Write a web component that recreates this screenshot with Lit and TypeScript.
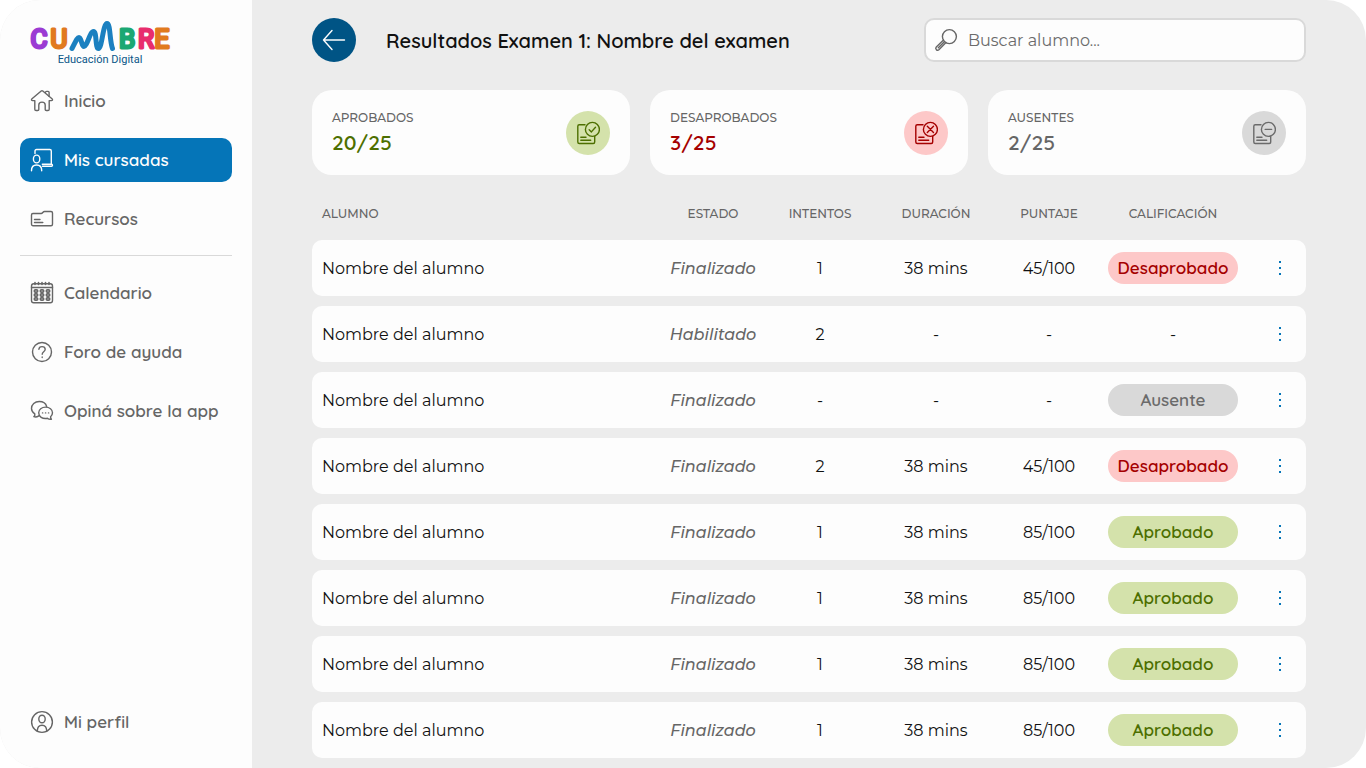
import { LitElement, html, css, svg, nothing } from "lit";
import { customElement, property } from "lit/decorators.js";
import { classMap } from "lit/directives/class-map.js";

const icons: Record<string, unknown> = {
  home: svg`<path d="M11.2 2 2 9.8c-1 .9-.5 1.8.6 1.8h2.2v8.6c0 .9.4 1.3 1.3 1.3h1.6c.7 0 1.1-.4 1.1-1.1v-4.3c0-2 1-3 3.2-3s3.200 1 3.200 3v4.300c0 .7.400 1.100 1.100 1.100h1.600c.900 0 1.300-.400 1.300-1.300v-8.600h2.200c1.100 0 1.600-.900.6-1.800L12.800 2c-.6-.5-1-.5-1.600 0Z"/><path d="M15.300 3.600c.2-.9.600-1.200 1.300-1.200h1.500c.7 0 1 .3 1 1v4"/>`,
  board: svg`<path d="M5 5.500V3c0-1 .5-1.500 1.500-1.500h13.300c1 0 1.500.5 1.500 1.500v13"/><path d="M12.300 16.300h9.200c1.300 0 1.300 1.900 0 1.900h-9"/><ellipse cx="6.600" cy="11" rx="3.200" ry="3.900"/><path d="M1.500 22.700c0-3.600 1.700-5.700 5.100-5.700s5.100 2.100 5.100 5.700"/>`,
  folder: svg`<path d="M1.500 7.900c0-.9.500-1.400 1.400-1.400h8.300c1.500 0 1.700-2 3.300-2h6.500c1 0 1.500.5 1.500 1.500v11.200c0 1-.5 1.500-1.500 1.500H2.900c-.9 0-1.400-.5-1.400-1.400Z"/><path d="M4.500 12.500h5.500M4.500 15.500h8.300"/>`,
  calendar: svg`<rect x="1.500" y="2.800" width="21" height="18.900" rx="2.200"/><path d="M1.500 6.500h21"/><path d="M5 1.500v2M8.500 1.500v2M12 1.500v2M15.500 1.500v2M19 1.500v2" stroke-width="1.600"/><g stroke-width="1.700"><rect x="4.300" y="8.800" width="3.400" height="2.300" rx="1.100"/><rect x="10.300" y="8.800" width="3.400" height="2.300" rx="1.100"/><rect x="16.300" y="8.800" width="3.400" height="2.300" rx="1.100"/><rect x="4.300" y="12.800" width="3.400" height="2.300" rx="1.100"/><rect x="10.300" y="12.800" width="3.400" height="2.300" rx="1.100"/><rect x="16.300" y="12.800" width="3.400" height="2.300" rx="1.100"/><rect x="4.300" y="16.800" width="3.400" height="2.300" rx="1.100"/><rect x="10.300" y="16.800" width="3.400" height="2.300" rx="1.100"/><rect x="16.300" y="16.800" width="3.400" height="2.300" rx="1.100"/></g>`,
  help: svg`<circle cx="12" cy="12" r="9.500"/><path d="M8.900 9.300c.1-1.800 1.400-2.700 3.100-2.700 1.900 0 3.200 1 3.200 2.700 0 2.500-3 2.500-3 5"/><path d="M12.200 17v.5"/>`,
  chat: svg`<path d="M8.800 16.800c-1.600 1.100-3.300 1.400-5 .9 1-.9 1.300-1.700 1-2.900C2.600 13.500 1.500 11.700 1.500 9.600c0-4.100 3.300-7.100 7.800-7.100 3.800 0 6.500 1.900 7.400 5"/><path d="M15.600 8.100c3.900 0 6.900 2.400 6.900 5.700 0 1.600-.7 2.900-1.900 3.900-.1 1 .1 1.700.8 2.500-1.500.2-2.800-.1-4-.9-5.100.9-8.700-1.700-8.700-5.500 0-3.300 3-5.700 6.900-5.700Z"/><path d="M12.500 13.900h.2M15.500 13.900h.2M18.500 13.900h.2"/>`,
  profile: svg`<circle cx="12" cy="12" r="10.400"/><ellipse cx="12" cy="9" rx="3.200" ry="3.800"/><path d="M7.300 21.200c0-4 1.500-6 4.700-6s4.700 2 4.700 6"/>`,
  search: svg`<circle cx="15.400" cy="8.600" r="7"/><path d="m9.500 12-7.200 7.100c-1.600 1.700.9 4.200 2.600 2.600l7.100-7.200M10.300 13.700l-6 6"/>`,
  back: svg`<path d="M22.500 12h-21M10 2.500 1.500 12l8.500 9.500"/>`,
  ok: svg`<path d="M9 3.800H3.300C2.300 3.800 1.800 4.300 1.800 5.300v15.700c0 1 .5 1.500 1.500 1.500h13.900c1 0 1.500-.5 1.500-1.500v-5.500M4.800 16.300H10M4.800 19.300h9.900"/><circle cx="16.400" cy="8.400" r="7"/><path d="m13.200 8.800 2.200 2.100 4.100-4.700"/>`,
  fail: svg`<path d="M9 3.800H3.300C2.300 3.800 1.800 4.300 1.800 5.300v15.700c0 1 .5 1.500 1.500 1.500h13.900c1 0 1.500-.5 1.500-1.500v-5.500M4.800 16.300H10M4.800 19.300h9.900"/><circle cx="16.400" cy="8.400" r="7"/><path d="m13.300 5.300 6.200 6.200M19.500 5.300l-6.200 6.200"/>`,
  absent: svg`<path d="M9 3.800H3.300C2.300 3.800 1.800 4.300 1.800 5.300v15.700c0 1 .5 1.500 1.500 1.500h13.900c1 0 1.500-.5 1.500-1.500v-5.500M4.800 16.300H10M4.800 19.300h9.900"/><circle cx="16.400" cy="8.400" r="7"/><path d="M13.200 8.400h6.400"/>`,
};

@customElement("ui-icon")
class UiIcon extends LitElement {
  @property() name = "";

  static styles = css`
    :host { display: block; width: 24px; height: 24px; flex: none; }
    .icon {
      display: block; width: 100%; height: 100%;
      fill: none; stroke: currentColor; stroke-width: 1.4;
      stroke-linecap: round; stroke-linejoin: round;
    }
  `;

  render() {
    return html`<svg class="icon" viewBox="0 0 24 24" aria-hidden="true">${icons[this.name] ?? nothing}</svg>`;
  }
}

@customElement("brand-logo")
class BrandLogo extends LitElement {
  static styles = css`
    :host { display: block; width: 140px; height: 46px; }
    .logo { display: block; width: 100%; height: 100%; overflow: visible; }
    .letter {
      font: 400 26px Roboto, sans-serif;
      stroke-width: 3; stroke-linejoin: round; stroke-linecap: round;
      text-anchor: middle;
    }
    .purple { fill: #9b3bd3; stroke: #9b3bd3; }
    .orange { fill: #e17a1f; stroke: #e17a1f; }
    .green { fill: #1ba873; stroke: #1ba873; }
    .pink { fill: #e82d6d; stroke: #e82d6d; }
    .ridge { fill: none; stroke: #1b80c0; stroke-width: 5; stroke-linecap: round; stroke-linejoin: round; }
    .tagline { font: 400 11px Roboto, sans-serif; fill: #0a5688; text-anchor: middle; }
  `;

  render() {
    return html`
      <svg class="logo" viewBox="0 0 140 46" role="img" aria-label="Cumbre Educación Digital">
        <text class="letter purple" x="9" y="28">C</text>
        <text class="letter orange" x="29" y="28">U</text>
        <path class="ridge" d="M42 28.500C45 23 47 17.500 49 17.500c2.500 0 2.500 9 5 9 3 0 6-15 9.500-15 3.500 0 1.500 17 5 17 3.500 0 4.500-25 8.500-25 3.500 0 2.500 17 5.500 25"/>
        <text class="letter green" x="97" y="28">B</text>
        <text class="letter pink" x="116" y="28">R</text>
        <text class="letter orange" x="132" y="28">E</text>
        <text class="tagline" x="70" y="43">Educación Digital</text>
      </svg>
    `;
  }
}

type Grade = "Aprobado" | "Desaprobado" | "Ausente" | "-";
interface Result { state: string; tries: string; time: string; score: string; grade: Grade; }

const passed: Result = { state: "Finalizado", tries: "1", time: "38 mins", score: "85/100", grade: "Aprobado" };
const results: Result[] = [
  { state: "Finalizado", tries: "1", time: "38 mins", score: "45/100", grade: "Desaprobado" },
  { state: "Habilitado", tries: "2", time: "-", score: "-", grade: "-" },
  { state: "Finalizado", tries: "-", time: "-", score: "-", grade: "Ausente" },
  { state: "Finalizado", tries: "2", time: "38 mins", score: "45/100", grade: "Desaprobado" },
  passed, passed, passed, passed,
];

const summary = [
  { label: "APROBADOS", value: "20/25", tone: "good", icon: "ok" },
  { label: "DESAPROBADOS", value: "3/25", tone: "bad", icon: "fail" },
  { label: "AUSENTES", value: "2/25", tone: "neutral", icon: "absent" },
];

const tones: Record<string, string> = { Aprobado: "good", Desaprobado: "bad", Ausente: "neutral" };

@customElement("app-root")
class AppRoot extends LitElement {
  static styles = css`
    :host {
      display: block; height: 100vh; overflow: hidden; background: #fff;
      font-family: Montserrat, Inter, sans-serif; color: #111;
    }
    * { box-sizing: border-box; }
    .page { display: flex; height: 100%; border-radius: 40px; overflow: hidden; background: #ececec; }
    .side {
      display: flex; flex-direction: column; flex: none; width: 252px;
      padding: 20px 20px 24px; background: #fdfdfd;
    }
    .brand { margin: 0 0 13px 10px; }
    .menu { display: flex; flex-direction: column; gap: 15px; flex: 1; }
    .link {
      display: flex; align-items: center; gap: 10px; height: 44px; padding: 0 10px;
      border-radius: 10px; color: #666; text-decoration: none; white-space: nowrap;
      font: 600 17px/24px Quicksand, Inter, sans-serif;
    }
    .active { background: #0575b8; color: #fdfdfd; }
    .rule { width: 100%; height: 1px; margin: -1px 0 0; border: 0; background: #d9d9d9; }
    .last { margin-top: auto; }
    .main { flex: 1; min-width: 0; padding: 18px 60px 0; }
    .top { display: flex; align-items: center; gap: 30px; margin-bottom: 28px; }
    .back {
      display: grid; place-items: center; flex: none; width: 44px; height: 44px; padding: 0;
      border: 0; border-radius: 50%; background: #005485; color: #fdfdfd;
    }
    .title { flex: 1; margin: 0; padding-top: 2px; font: 600 20px/24px Quicksand, Inter, sans-serif; white-space: nowrap; }
    .search {
      display: flex; align-items: center; gap: 10px; width: 382px; height: 44px; padding: 0 8px;
      border: 2px solid #d9d9d9; border-radius: 10px; background: #fdfdfd; color: #666;
    }
    .field {
      flex: 1; min-width: 0; padding: 2px 0 0; border: 0; outline: 0; background: none; color: #111;
      font: 400 16px/24px Montserrat, Inter, sans-serif;
    }
    .field::placeholder { color: #6b6b6b; opacity: 1; }
    .cards { display: grid; grid-template-columns: repeat(3, 1fr); gap: 20px; margin-bottom: 13px; }
    .card {
      display: flex; align-items: center; justify-content: space-between;
      padding: 18px 20px; border-radius: 20px; background: #fdfdfd;
    }
    .label { margin: 0; font-size: 12px; line-height: 20px; font-weight: 500; color: #666; }
    .value { margin: 0; font: 600 21px/29px Quicksand, Inter, sans-serif; }
    .value.good { color: #4d6f00; }
    .value.bad { color: #a50000; }
    .value.neutral { color: #666; }
    .badge { display: grid; place-items: center; width: 44px; height: 44px; border-radius: 50%; }
    .badge.good, .pill.good { background: #d4e2ab; color: #4d6f00; }
    .badge.bad, .pill.bad { background: #fdc8c8; color: #a50000; }
    .badge.neutral, .pill.neutral { background: #d9d9d9; color: #6b6b6b; }
    .grid { width: 100%; table-layout: fixed; border-collapse: separate; border-spacing: 0 10px; }
    .state { width: 122px; }
    .tries { width: 92px; }
    .time { width: 140px; }
    .score { width: 86px; }
    .grade { width: 162px; }
    .more { width: 52px; }
    .head { height: 32px; padding: 0 0 2px; font-size: 12px; font-weight: 500; color: #666; }
    .cell { height: 56px; padding: 0; background: #fdfdfd; font-size: 16px; line-height: 24px; text-align: center; }
    .text { padding-top: 2px; }
    .name { padding-left: 10px; text-align: left; }
    .cell.name { border-radius: 10px 0 0 10px; }
    .cell.end { border-radius: 0 10px 10px 0; }
    .italic { font-style: italic; font-weight: 500; color: #666; }
    .pill {
      display: block; width: 130px; margin: 0 auto; border-radius: 16px;
      font: 600 17px/32px Quicksand, Inter, sans-serif;
    }
    .dots {
      display: flex; flex-direction: column; align-items: center; justify-content: center; gap: 4px;
      width: 24px; height: 24px; margin: 0 auto; padding: 0; border: 0; background: none;
    }
    .dot { width: 2px; height: 2px; background: #0575b8; }
  `;

  private link(icon: string, text: string, extra = "") {
    return html`<a href="#" class=${classMap({ link: true, active: extra === "active", last: extra === "last" })}>
      <ui-icon name=${icon}></ui-icon><span>${text}</span></a>`;
  }

  private row(r: Result) {
    return html`<tr>
      <td class="cell text name">Nombre del alumno</td>
      <td class="cell text italic">${r.state}</td>
      <td class="cell text">${r.tries}</td>
      <td class="cell text">${r.time}</td>
      <td class="cell text">${r.score}</td>
      ${r.grade === "-"
        ? html`<td class="cell text">-</td>`
        : html`<td class="cell"><span class="pill ${tones[r.grade]}">${r.grade}</span></td>`}
      <td class="cell end">
        <button class="dots" type="button" aria-label="Más opciones">
          <span class="dot"></span><span class="dot"></span><span class="dot"></span>
        </button>
      </td>
    </tr>`;
  }

  render() {
    return html`
      <div class="page">
        <aside class="side">
          <brand-logo class="brand"></brand-logo>
          <nav class="menu">
            ${this.link("home", "Inicio")}
            ${this.link("board", "Mis cursadas", "active")}
            ${this.link("folder", "Recursos")}
            <hr class="rule" />
            ${this.link("calendar", "Calendario")}
            ${this.link("help", "Foro de ayuda")}
            ${this.link("chat", "Opiná sobre la app")}
            ${this.link("profile", "Mi perfil", "last")}
          </nav>
        </aside>
        <main class="main">
          <header class="top">
            <button class="back" type="button" aria-label="Volver"><ui-icon name="back"></ui-icon></button>
            <h1 class="title">Resultados Examen 1: Nombre del examen</h1>
            <label class="search">
              <ui-icon name="search"></ui-icon>
              <input class="field" type="text" aria-label="Buscar alumno" placeholder="Buscar alumno..." />
            </label>
          </header>
          <section class="cards">
            ${summary.map((s) => html`<article class="card">
              <div>
                <p class="label">${s.label}</p>
                <p class="value ${s.tone}">${s.value}</p>
              </div>
              <span class="badge ${s.tone}"><ui-icon name=${s.icon}></ui-icon></span>
            </article>`)}
          </section>
          <table class="grid">
            <thead>
              <tr>
                <th class="head name" scope="col">ALUMNO</th>
                <th class="head state" scope="col">ESTADO</th>
                <th class="head tries" scope="col">INTENTOS</th>
                <th class="head time" scope="col">DURACIÓN</th>
                <th class="head score" scope="col">PUNTAJE</th>
                <th class="head grade" scope="col">CALIFICACIÓN</th>
                <td class="head more"></td>
              </tr>
            </thead>
            <tbody>${results.map((r) => this.row(r))}</tbody>
          </table>
        </main>
      </div>
    `;
  }
}
